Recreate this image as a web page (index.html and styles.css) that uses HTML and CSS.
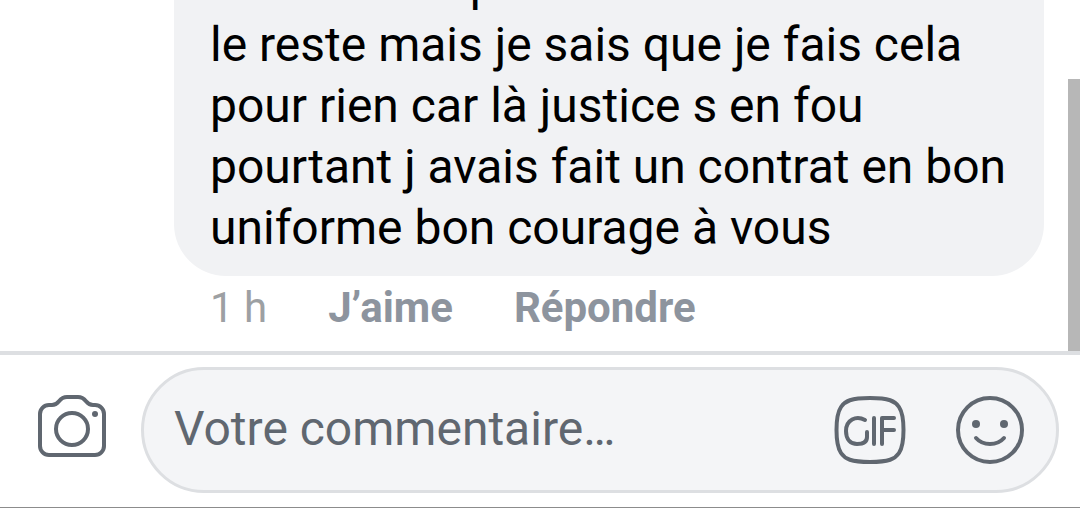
FILE: index.html
```html
<!DOCTYPE html>
<html lang="fr">
<head>
  <meta charset="UTF-8">
  <meta name="viewport" content="width=device-width, initial-scale=1.0">
  <title>Commentaires</title>
  <link rel="stylesheet" href="styles.css">
</head>
<body>
  <main class="thread">
    <article class="comment">
      <p class="bubble">a formation pour ma dit ta les statuts<br>le reste mais je sais que je fais cela<br>pour rien car là justice s en fou<br>pourtant j avais fait un contrat en bon<br>uniforme bon courage à vous</p>
      <div class="comment_actions">
        <time class="comment_time">1 h</time>
        <button type="button" class="action_btn">J’aime</button>
        <button type="button" class="action_btn">Répondre</button>
      </div>
    </article>
    <div class="scrollbar"></div>
  </main>
  <form class="composer">
    <button type="button" class="icon_btn" aria-label="Photo">
      <svg class="icon" width="72" height="72" viewBox="0 0 72 72">
        <path d="M13 11H16C24 11 22 3 31 3H42C51 3 49 11 57 11H59A9 9 0 0 1 68 20V52A9 9 0 0 1 59 61H13A9 9 0 0 1 4 52V20A9 9 0 0 1 13 11Z"/>
        <circle cx="36" cy="35" r="16"/>
        <circle class="dot" cx="59" cy="20" r="3"/>
      </svg>
    </button>
    <div class="composer_field">
      <input type="text" class="composer_input" placeholder="Votre commentaire…" aria-label="Votre commentaire">
      <button type="button" class="icon_btn" aria-label="GIF">
        <svg class="icon" width="72" height="72" viewBox="0 0 72 72">
          <path d="M36 4C55 4 61 7 65 13C71 22 71 50 65 59C61 65 55 68 36 68C17 68 11 65 7 59C1 50 1 22 7 13C11 7 17 4 36 4Z"/>
          <path d="M31 26C22 21 12 26 12 37C12 46 17 50 23 50C28 50 33 49 33 43V38"/>
          <path d="M40 24V50M48 50V24H60M48 36H60"/>
        </svg>
      </button>
      <button type="button" class="icon_btn" aria-label="Emoji">
        <svg class="icon" width="72" height="72" viewBox="0 0 72 72">
          <circle cx="36" cy="36" r="32"/>
          <circle class="dot" cx="22" cy="30" r="4"/>
          <circle class="dot" cx="50" cy="30" r="4"/>
          <path d="M22 44C29 52 43 52 50 44"/>
        </svg>
      </button>
    </div>
  </form>
</body>
</html>
```
FILE: styles.css
```css
* {
  box-sizing: border-box;
}
body {
  display: flex;
  flex-direction: column;
  height: 100vh;
  margin: 0;
  overflow: hidden;
  background-color: #fff;
  border-bottom: 1px solid #8c8c8c;
  font-family: Roboto, "Liberation Sans", sans-serif;
}
button {
  padding: 0;
  border: 0;
  background: none;
  font-family: inherit;
  cursor: pointer;
}
.thread {
  position: relative;
  display: flex;
  flex: 1;
  flex-direction: column;
  justify-content: flex-end;
  min-height: 0;
  overflow: hidden;
}
.comment {
  padding: 0 36px 13px 174px;
}
.bubble {
  margin: 0;
  padding: 18px 36px;
  border-radius: 52px;
  background-color: #f1f2f4;
  color: #000;
  font-size: 48px;
  line-height: 61px;
  white-space: nowrap;
}
.comment_actions {
  display: flex;
  gap: 61px;
  padding: 2px 36px 0;
  font-size: 42px;
  line-height: 60px;
}
.comment_time {
  color: #9da0a3;
}
.action_btn {
  color: #8d949e;
  font-size: 42px;
  font-weight: 700;
  line-height: 60px;
}
.scrollbar {
  position: absolute;
  top: 79px;
  right: 0;
  bottom: 0;
  width: 12px;
  background-color: #b7b7b7;
}
.composer {
  display: flex;
  align-items: center;
  gap: 33px;
  padding: 12px 21px 14px 36px;
  border-top: 4px solid #dddfe2;
}
.composer_field {
  display: flex;
  flex: 1;
  align-items: center;
  gap: 48px;
  min-width: 0;
  height: 126px;
  padding: 0 30px;
  border: 3px solid #dddfe2;
  border-radius: 63px;
  background-color: #f4f5f7;
}
.composer_input {
  flex: 1;
  min-width: 0;
  padding: 0 0 4px;
  border: 0;
  outline: 0;
  background: none;
  color: #606770;
  font-family: inherit;
  font-size: 48px;
}
.composer_input::placeholder {
  color: #606770;
  opacity: 1;
}
.icon_btn {
  display: flex;
  flex: none;
}
.icon {
  fill: none;
  stroke: #606770;
  stroke-width: 4;
  stroke-linecap: round;
  stroke-linejoin: round;
}
.icon .dot {
  fill: #606770;
  stroke: none;
}
```
